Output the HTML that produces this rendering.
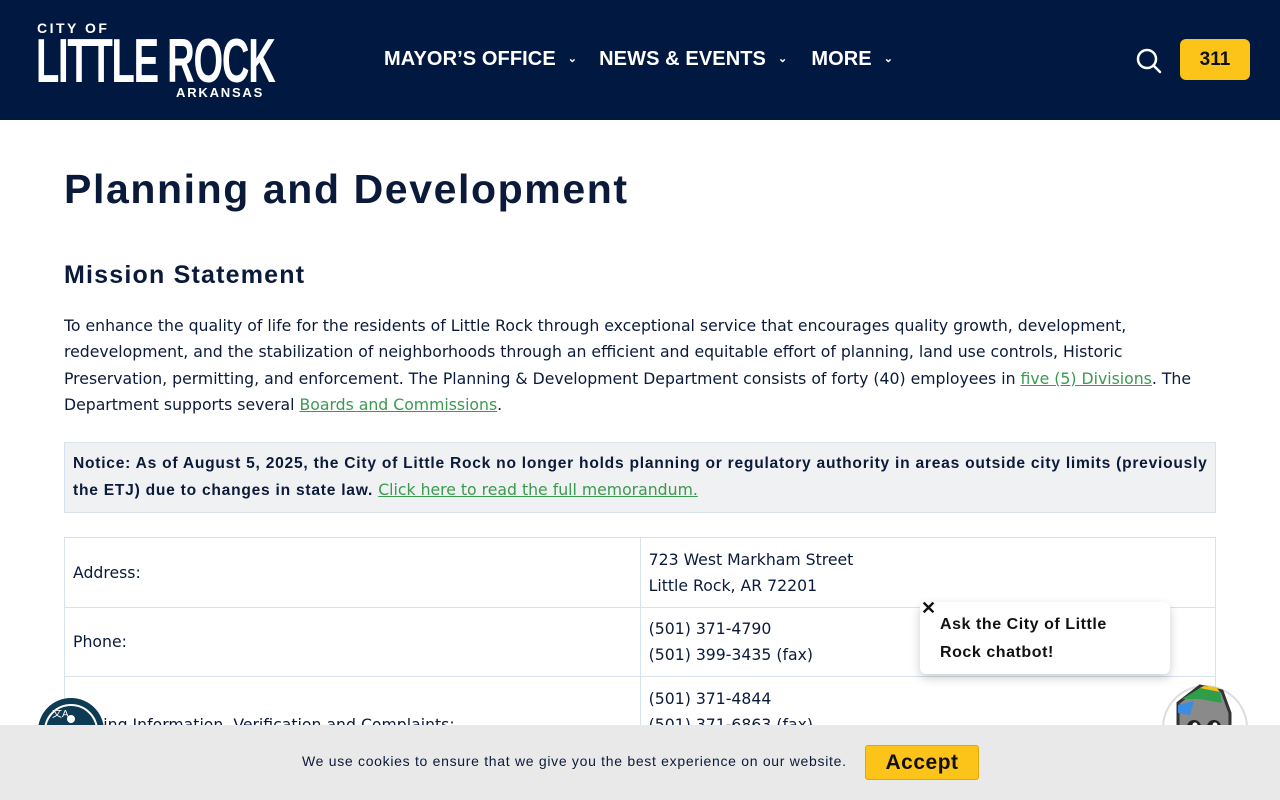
<!DOCTYPE html>
<html><head><meta charset="utf-8">
<style>
*{margin:0;padding:0;box-sizing:border-box}
body{width:1280px;height:800px;overflow:hidden;font-family:"Liberation Sans",sans-serif;color:#0b1a3a;background:#fff;position:relative}
header{height:120px;background:#011840;position:relative;color:#fff}
.logo1{position:absolute;left:37px;top:20px;font-size:14px;font-weight:bold;letter-spacing:2.5px}
.logo2{position:absolute;left:36px;top:31px;font-size:62px;font-weight:bold;letter-spacing:-2px;transform:scaleX(0.615);transform-origin:left;line-height:62px;white-space:nowrap}
.logo3{position:absolute;left:176px;top:85px;font-size:13px;font-weight:bold;letter-spacing:1.8px}
nav{position:absolute;left:384px;top:48px;font-size:20px;font-weight:bold;display:flex;white-space:nowrap}
nav span{letter-spacing:0.1px}
nav small{font-size:11px;margin-left:12px;vertical-align:3px}
.btn311{position:absolute;left:1180px;top:39px;width:70px;height:41px;background:#fcc419;border-radius:6px;color:#111;font-weight:bold;font-size:19px;text-align:center;line-height:41px}
.search{position:absolute;left:1135px;top:47px}
h1{position:absolute;left:64px;top:166px;font-size:41px;letter-spacing:1.6px}
h2{position:absolute;left:64px;top:261px;font-size:25px;letter-spacing:1.2px}
.dv{font-family:"DejaVu Sans",sans-serif;font-size:15.7px}
p.m{position:absolute;left:64px;top:313px;line-height:26.3px;white-space:nowrap}
a{color:#3b9a4f;text-decoration:underline}
.notice{position:absolute;left:64px;top:442px;width:1152px;height:71px;background:#f0f1f2;border:1px solid #d6e2ee;padding:8px 8px;font-size:15.6px;font-weight:bold;line-height:26px;letter-spacing:0.75px;white-space:nowrap}
.notice a{font-weight:normal;font-family:"DejaVu Sans",sans-serif;font-size:15.7px;letter-spacing:0}
table{position:absolute;left:64px;top:537px;width:1152px;border-collapse:collapse}
td{border:1px solid #d6e2ee;padding:8px 8px;line-height:26px;vertical-align:middle;width:576px;white-space:nowrap}
.cookie{position:absolute;left:0;top:725px;width:1280px;height:75px;background:#e9e9e9;font-size:14px;letter-spacing:0.7px}
.cookie span{position:absolute;left:302px;top:28px}
.accept{position:absolute;left:865px;top:20px;width:114px;height:35px;background:#fcc419;border:1px solid #e0a800;border-radius:3px;font-weight:bold;font-size:21px;text-align:center;line-height:33px;color:#111;letter-spacing:0.5px}
.bubble{position:absolute;left:920px;top:602px;width:250px;height:72px;background:#fff;border-radius:6px;box-shadow:0 4px 10px rgba(0,0,0,.2);padding:9px 20px;font-weight:bold;font-size:16px;line-height:28px;color:#111;letter-spacing:0.55px}
.x{position:absolute;left:921px;top:598px;font-size:18px;font-weight:bold;color:#111}
</style></head><body>
<header>
<div class="logo1">CITY OF</div>
<div class="logo2">LITTLE ROCK</div>
<div class="logo3">ARKANSAS</div>
<nav><span>MAYOR’S OFFICE<small>⌄</small></span><span style="margin-left:22px">NEWS &amp; EVENTS<small>⌄</small></span><span style="margin-left:24px">MORE<small>⌄</small></span></nav>
<svg class="search" width="28" height="28" viewBox="0 0 28 28"><circle cx="12" cy="12" r="9" fill="none" stroke="#fff" stroke-width="2.5"/><line x1="18.5" y1="18.5" x2="25" y2="25" stroke="#fff" stroke-width="2.5" stroke-linecap="round"/></svg>
<div class="btn311">311</div>
</header>
<h1>Planning and Development</h1>
<h2>Mission Statement</h2>
<p class="m dv">To enhance the quality of life for the residents of Little Rock through exceptional service that encourages quality growth, development,<br>redevelopment, and the stabilization of neighborhoods through an efficient and equitable effort of planning, land use controls, Historic<br>Preservation, permitting, and enforcement. The Planning &amp; Development Department consists of forty (40) employees in <a>five (5) Divisions</a>. The<br>Department supports several <a>Boards and Commissions</a>.</p>
<div class="notice">Notice: As of August 5, 2025, the City of Little Rock no longer holds planning or regulatory authority in areas outside city limits (previously<br>the ETJ) due to changes in state law. <a>Click here to read the full memorandum.</a></div>
<table class="dv">
<tr style="height:70px"><td>Address:</td><td>723 West Markham Street<br>Little Rock, AR 72201</td></tr>
<tr style="height:69px"><td>Phone:</td><td>(501) 371-4790<br>(501) 399-3435 (fax)</td></tr>
<tr style="height:70px"><td style="padding-top:34px">Zoning Information, Verification and Complaints:</td><td>(501) 371-4844<br>(501) 371-6863 (fax)</td></tr>
</table>
<svg style="position:absolute;left:35px;top:695px" width="72" height="72" viewBox="0 0 72 72"><circle cx="36" cy="36" r="33" fill="#0d3b53"/><circle cx="36" cy="36" r="26" fill="none" stroke="#fff" stroke-width="2"/><circle cx="36" cy="24" r="4" fill="#fff"/><text x="17" y="22" fill="#fff" font-size="10" font-family="Liberation Sans">文A</text></svg>
<div class="bubble">Ask the City of Little<br>Rock chatbot!</div>
<div class="x">✕</div>
<svg style="position:absolute;left:1160px;top:683px" width="90" height="60" viewBox="0 0 90 60"><circle cx="45" cy="45" r="42" fill="#fff" stroke="#ddd" stroke-width="2"/><path d="M18 20 L40 3 L62 8 L70 30 L70 60 L18 60Z" fill="#8a8a8a" stroke="#333" stroke-width="3"/><path d="M22 16 L40 5 L60 9 L62 20 L40 16Z" fill="#2e9e4b"/><path d="M40 5 L60 9 L56 4 L44 3Z" fill="#f2c21b"/><path d="M18 22 L34 18 L30 32 L18 30Z" fill="#3a8de0"/><circle cx="34" cy="44" r="7" fill="#222"/><circle cx="54" cy="44" r="7" fill="#222"/><circle cx="35" cy="42" r="2.5" fill="#fff"/><circle cx="55" cy="42" r="2.5" fill="#fff"/></svg>
<div class="cookie"><span>We use cookies to ensure that we give you the best experience on our website.</span><div class="accept">Accept</div></div>
</body></html>
